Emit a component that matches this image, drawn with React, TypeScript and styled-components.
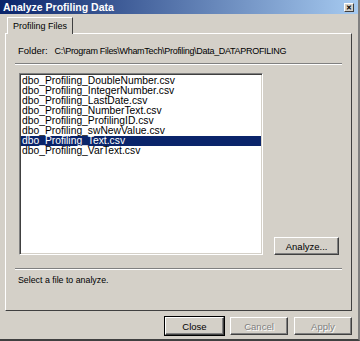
import React from "react";
import styled, {createGlobalStyle} from "styled-components";

const Global = createGlobalStyle`
body{
margin:0;
background:#d4d0c8;
}
`;

const Window = styled.div`
width: 360px;
height: 341px;
box-sizing: border-box;
display: flex;
flex-direction: column;
background: #d4d0c8;
font-family: "Liberation Sans", Arial, sans-serif;
font-size: 9.5px;
color: #000;
border-bottom: 2px solid #404040;
border-right: 2px solid #808080;
overflow: hidden;
`;

const TitleBar = styled.div`
height: 14px;
flex-shrink: 0;
display: flex;
align-items: center;
justify-content: space-between;
padding: 0 4px 0 3px;
background: linear-gradient(to right, #0a246a, #a6caf0);
color: #fff;
font-weight: bold;
font-size: 10.5px;
`;

const CloseBox = styled.div`
width: 10px;
height: 9px;
box-sizing: border-box;
background: #d4d0c8;
border: 1px solid;
border-color: #fff #404040 #404040 #fff;
display: flex;
align-items: center;
justify-content: center;
font-size: 7px;
font-weight: bold;
line-height: 1;
color: #000;
`;

const Body = styled.div`
flex: 1;
display: flex;
flex-direction: column;
padding: 3px 6px 6px 5px;
`;

const TabStrip = styled.div`
display: flex;
padding-left: 2px;
height: 16px;
`;

const Tab = styled.div`
padding: 0 5px;
display: flex;
align-items: center;
font-size: 9px;
border: 1px solid;
border-color: #fff #404040 transparent #fff;
border-bottom: none;
background: #d4d0c8;
margin-bottom: -1px;
position: relative;
z-index: 1;
`;

const Panel = styled.div`
height: 278px;
box-sizing: border-box;
display: flex;
flex-direction: column;
border: 1px solid;
border-color: #fff #404040 #404040 #fff;
padding: 0 9px 0 9px;
`;

const FolderRow = styled.div`
display: flex;
gap: 7px;
height: 25px;
align-items: center;
padding: 4px 0 0 3px;
`;

const FolderPath = styled.span`
font-size: 9px;
letter-spacing: -0.3px;
`;

const Separator = styled.div`
height: 0;
border-top: 1px solid #808080;
border-bottom: 1px solid #fff;
`;

const ListArea = styled.div`
display: flex;
align-items: flex-end;
gap: 11px;
padding: 8px 3px 0 4px;
`;

const FileList = styled.ul`
list-style: none;
margin: 0;
padding: 2px 1px;
width: 245px;
height: 182px;
box-sizing: border-box;
background: #fff;
border: 1px solid;
border-color: #808080 #fff #fff #808080;
box-shadow: inset 1px 1px 0 #404040, inset -1px -1px 0 #d4d0c8;
font-size: 10.3px;
`;

const FileItem = styled.li<{selected?: boolean}>`
height: 10px;
line-height: 10px;
padding-left: 1px;
white-space: nowrap;
background: ${p => p.selected ? "#0a246a" : "transparent"};
color: ${p => p.selected ? "#fff" : "#000"};
`;

const Button = styled.button<{primary?: boolean}>`
width: ${p => p.primary ? "59px" : "58px"};
height: 18px;
padding: 0;
font-family: inherit;
font-size: 9.5px;
background: #d4d0c8;
color: ${p => p.disabled ? "#808080" : "#000"};
text-shadow: ${p => p.disabled ? "1px 1px 0 #fff" : "none"};
border: 1px solid;
border-color: #fff #404040 #404040 #fff;
box-shadow: ${p => p.primary ? "0 0 0 1px #000, inset -1px -1px 0 #808080" : "inset -1px -1px 0 #808080"};
`;

const AnalyzeButton = styled(Button)`
width: 65px;
`;

const Status = styled.div`
padding: 5px 0 0 3px;
font-size: 8.8px;
`;

const LowerSep = styled(Separator)`
margin-top: 13px;
`;

const ButtonRow = styled.div`
display: flex;
justify-content: flex-end;
gap: 6px;
padding: 6px 0 0 0;
`;

const files = [
  "dbo_Profiling_DoubleNumber.csv",
  "dbo_Profiling_IntegerNumber.csv",
  "dbo_Profiling_LastDate.csv",
  "dbo_Profiling_NumberText.csv",
  "dbo_Profiling_ProfilingID.csv",
  "dbo_Profiling_swNewValue.csv",
  "dbo_Profiling_Text.csv",
  "dbo_Profiling_VarText.csv",
];

export default function App() {
  return (
    <>
      <Global/>
      <Window>
        <TitleBar>
          <span>Analyze Profiling Data</span>
          <CloseBox>✕</CloseBox>
        </TitleBar>
        <Body>
          <TabStrip>
            <Tab>Profiling Files</Tab>
          </TabStrip>
          <Panel>
            <FolderRow>
              <span>Folder:</span>
              <FolderPath>C:\Program Files\WhamTech\Profiling\Data_DATAPROFILING</FolderPath>
            </FolderRow>
            <Separator/>
            <ListArea>
              <FileList>
                {files.map(f => (
                  <FileItem key={f} selected={f === "dbo_Profiling_Text.csv"}>{f}</FileItem>
                ))}
              </FileList>
              <AnalyzeButton>Analyze...</AnalyzeButton>
            </ListArea>
            <LowerSep/>
            <Status>Select a file to analyze.</Status>
          </Panel>
          <ButtonRow>
            <Button primary>Close</Button>
            <Button disabled>Cancel</Button>
            <Button disabled>Apply</Button>
          </ButtonRow>
        </Body>
      </Window>
    </>
  );
}
